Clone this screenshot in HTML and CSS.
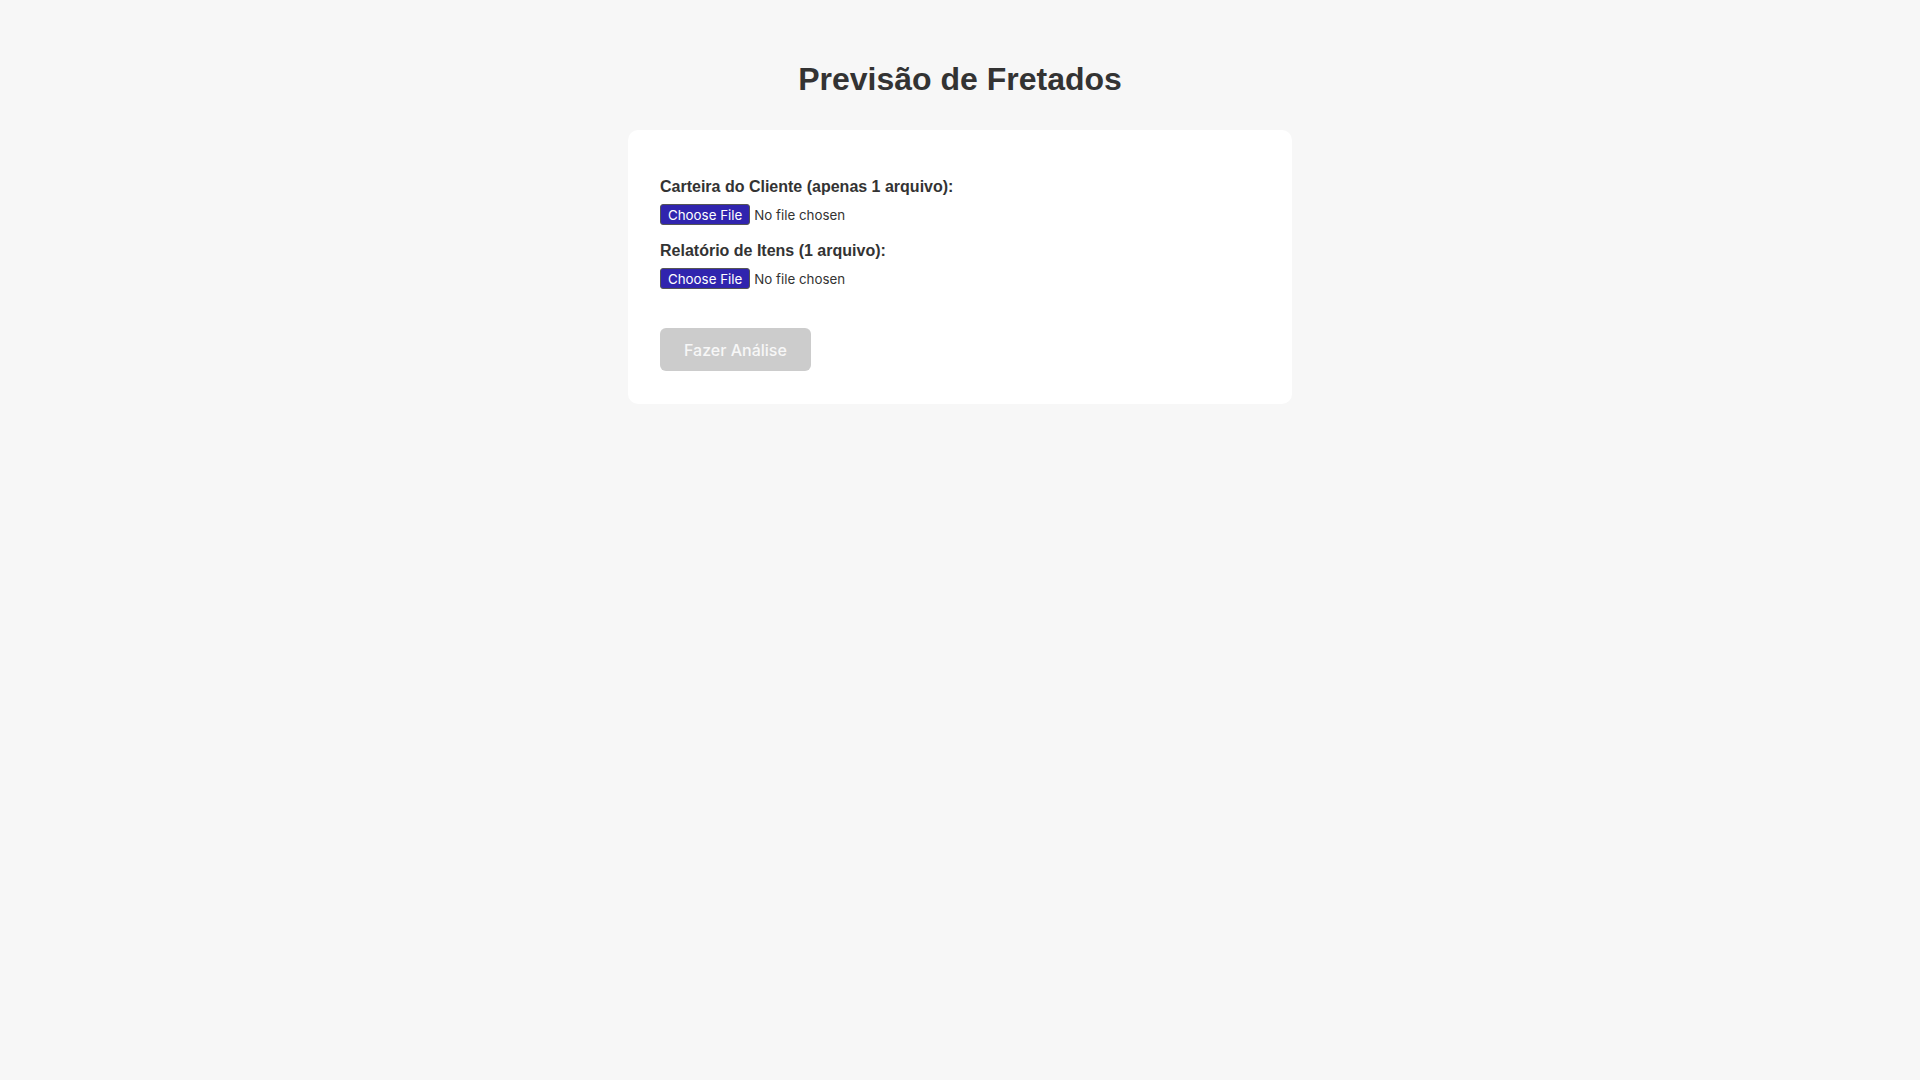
FILE: index.html
```html
<!DOCTYPE html>
<html lang="pt-BR">

<head>
    <meta charset="UTF-8">
    <meta name="viewport" content="width=device-width, initial-scale=1.0">
    <title>Previsão de Fretados</title>
    <link rel="stylesheet" href="styles.css">
</head>

<body>
    <div class="container">
        <h1 class="title">Previsão de Fretados</h1>

        <div class="card">
            <div class="form-group">
                <label for="carteira">Carteira do Cliente (apenas 1 arquivo):</label>
                <input type="file" id="carteira">
            </div>
            <div class="form-group">
                <label for="relatorio">Relatório de Itens (1 arquivo):</label>
                <input type="file" id="relatorio">
            </div>
            <button id="btn-analise" disabled>Fazer Análise</button>
        </div>
    </div>
</body>

</html>
```

FILE: styles.css
```css
* {
    margin: 0;
    padding: 0;
    box-sizing: border-box;
}

body {
    background-color: #f7f7f7;
    font-family: "Liberation Sans", Arial, sans-serif;
    color: #333;
}

.container {
    padding-top: 61px;
}

.title {
    font-size: 32px;
    line-height: 37px;
    text-align: center;
    margin-bottom: 32px;
}

.card {
    background-color: #fff;
    width: 664px;
    margin: 0 auto;
    border-radius: 10px;
    padding: 48px 32px 33px;
}

.form-group {
    margin-bottom: 17px;
}

.form-group label {
    display: block;
    font-size: 16px;
    font-weight: bold;
    line-height: 18px;
    margin-bottom: 8px;
}

input[type="file"] {
    font-family: Inter, sans-serif;
    font-size: 13.33px;
    color: #333;
    height: 21px;
}

input[type="file"]::file-selector-button {
    font-family: Inter, sans-serif;
    font-size: 13.33px;
    background-color: #3024ae;
    color: #fff;
    border: 1px solid #555;
    border-radius: 3px;
    padding: 1px 7px;
    height: 21px;
    margin-right: 4px;
    cursor: pointer;
}

#btn-analise {
    margin-top: 22px;
    background-color: #ccc;
    color: #f7f7f7;
    border: 0;
    border-radius: 6px;
    height: 43px;
    padding: 0 24px;
    font-family: Inter, sans-serif;
    font-size: 16px;
    font-weight: 500;
}

#btn-analise:disabled {
    cursor: not-allowed;
}
```
